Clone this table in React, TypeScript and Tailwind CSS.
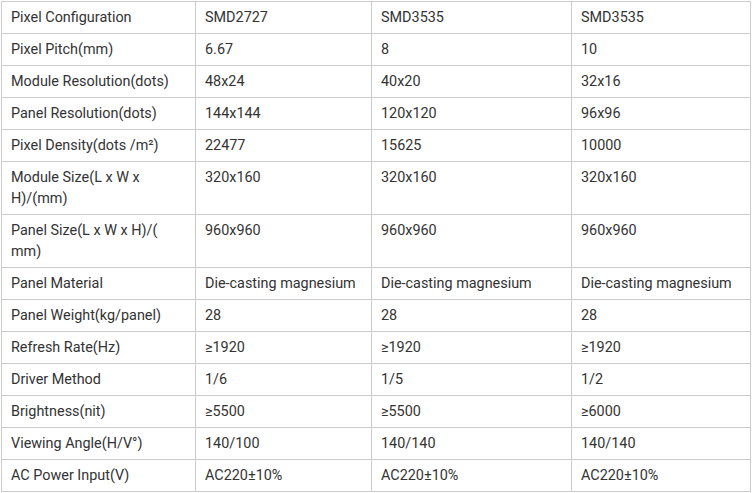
const rows: [string, string, string, string][] = [
  ["Pixel Configuration", "SMD2727", "SMD3535", "SMD3535"],
  ["Pixel Pitch(mm)", "6.67", "8", "10"],
  ["Module Resolution(dots)", "48x24", "40x20", "32x16"],
  ["Panel Resolution(dots)", "144x144", "120x120", "96x96"],
  ["Pixel Density(dots /m²)", "22477", "15625", "10000"],
  ["Module Size(L x W x H)/(mm)", "320x160", "320x160", "320x160"],
  ["Panel Size(L x W x H)/(\u200Bmm)", "960x960", "960x960", "960x960"],
  ["Panel Material", "Die-casting magnesium", "Die-casting magnesium", "Die-casting magnesium"],
  ["Panel Weight(kg/panel)", "28", "28", "28"],
  ["Refresh Rate(Hz)", "≥1920", "≥1920", "≥1920"],
  ["Driver Method", "1/6", "1/5", "1/2"],
  ["Brightness(nit)", "≥5500", "≥5500", "≥6000"],
  ["Viewing Angle(H/V°)", "140/100", "140/140", "140/140"],
  ["AC Power Input(V)", "AC220±10%", "AC220±10%", "AC220±10%"],
];

export default function App() {
  return (
    <div className="h-[493px] w-[752px] overflow-hidden bg-white pl-px pt-px">
      <table
        className="w-[749px] table-fixed border-collapse text-[14.4px] leading-[21px] text-[#333]"
        style={{ fontFamily: "Roboto, sans-serif" }}
      >
        <colgroup>
          <col className="w-[194px]" />
          <col className="w-[176px]" />
          <col className="w-[200px]" />
          <col className="w-[179px]" />
        </colgroup>
        <tbody>
          {rows.map((row, i) => (
            <tr key={i}>
              {row.map((cell, j) => (
                <td
                  key={j}
                  className="border border-[#ccc] px-[9px] py-[5px] align-top"
                >
                  {cell}
                </td>
              ))}
            </tr>
          ))}
        </tbody>
      </table>
    </div>
  );
}
